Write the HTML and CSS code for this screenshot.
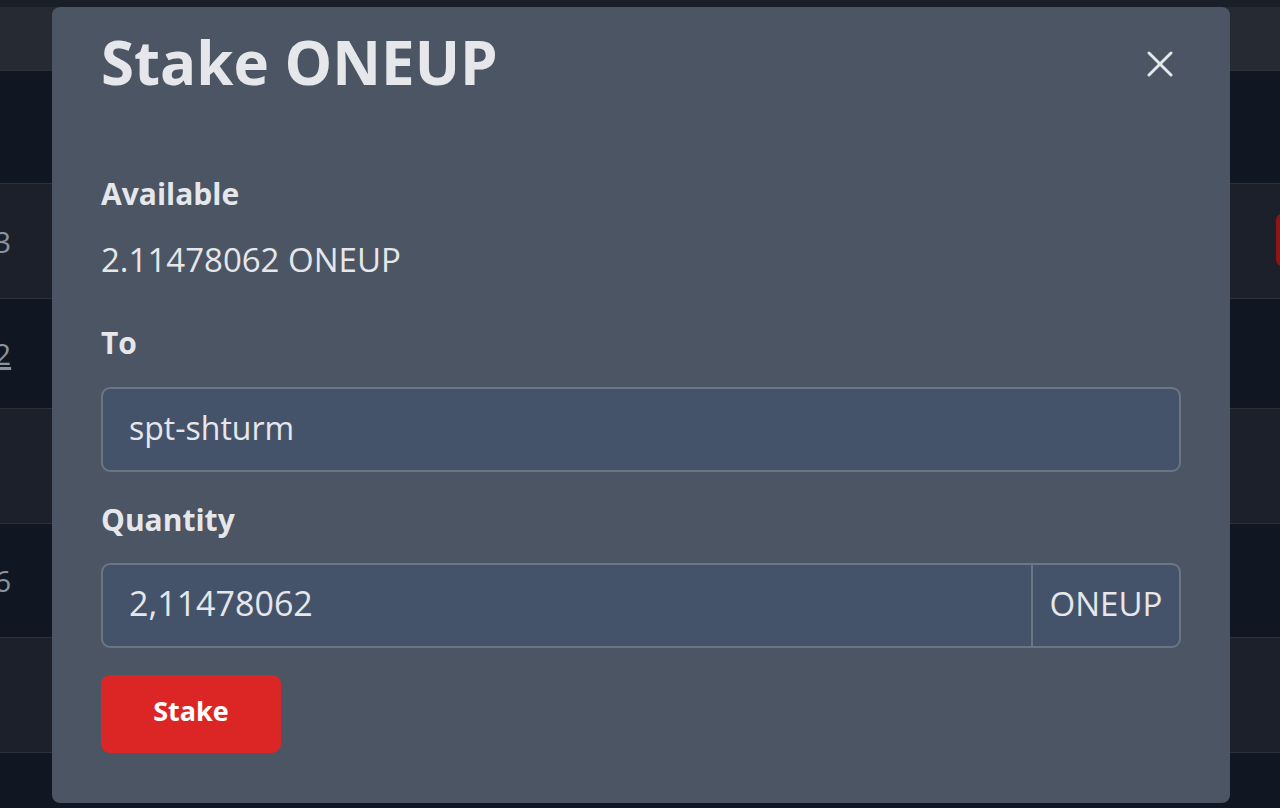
FILE: index.html
```html
<!DOCTYPE html>
<html>
<head>
<meta charset="utf-8">
<link rel="stylesheet" href="styles.css">
</head>
<body>
<div class="page">
  <div class="topstrip"></div>
  <div class="thead"></div>
  <div class="row dark r1"></div>
  <div class="row light r2"><span class="num">3</span><span class="redbtn"></span></div>
  <div class="row dark r3"><span class="num underline">2</span></div>
  <div class="row light r4"></div>
  <div class="row dark r5"><span class="num">6</span></div>
  <div class="row light r6"></div>
  <div class="row dark r7"></div>
</div>

<div class="modal">
  <div class="modal-header">
    <h2 class="title">Stake ONEUP</h2>
    <button class="close" aria-label="Close">
      <svg width="26" height="26" viewBox="0 0 26 26"><path d="M2 2 L24 24 M24 2 L2 24" stroke="#e5e7eb" stroke-width="3" stroke-linecap="round"/></svg>
    </button>
  </div>
  <div class="modal-body">
    <div class="label first">Available</div>
    <div class="value">2.11478062 ONEUP</div>
    <div class="label to">To</div>
    <div class="input">spt-shturm</div>
    <div class="label qty">Quantity</div>
    <div class="input-group">
      <div class="input-field">2,11478062</div>
      <div class="addon">ONEUP</div>
    </div>
    <button class="stake">Stake</button>
  </div>
</div>
</body>
</html>
```

FILE: styles.css
```css
html, body {
  margin: 0;
  padding: 0;
  background: #111722;
  font-family: "Open Sans", "Lato", sans-serif;
  overflow: hidden;
}
.page {
  width: 1280px;
  height: 808px;
  overflow: hidden;
  display: flex;
  flex-direction: column;
}
.topstrip {
  flex-shrink: 0;
  height: 7px;
  background: #1b1f27;
}
.thead {
  flex-shrink: 0;
  height: 63px;
  background: #252a33;
}
.row {
  flex-shrink: 0;
  box-sizing: border-box;
  height: 114px;
  border-top: 1px solid #2b313b;
  position: relative;
  display: flex;
  align-items: center;
}
.row.r1 { height: 113px; }
.row.r2 { height: 115px; }
.row.r3 { height: 110px; }
.row.r4 { height: 115px; }
.row.r5 { height: 114px; }
.row.r6 { height: 115px; }
.row.dark { background: #111722; }
.row.light { background: #1b202a; }
.num {
  color: #8b929e;
  font-size: 30px;
  margin-left: -6px;
}
.num.underline { text-decoration: underline; }
.redbtn {
  position: absolute;
  right: -20px;
  top: 30px;
  width: 24px;
  height: 52px;
  border-radius: 6px;
  background: #8e1515;
}

.modal {
  position: absolute;
  left: 52px;
  top: 7px;
  width: 1178px;
  height: 796px;
  box-sizing: border-box;
  background: #4b5563;
  border-radius: 8px;
  padding: 19px 49px 0 49px;
  color: #e5e7eb;
}
.modal-header {
  display: flex;
  align-items: center;
  justify-content: space-between;
  height: 72px;
}
.title {
  margin: 0;
  font-size: 60px;
  font-weight: 700;
  line-height: 72px;
  color: #e5e7eb;
}
.close {
  background: none;
  border: 0;
  padding: 0;
  margin-right: 8px;
  margin-top: 4px;
  display: flex;
}
.modal-body {
  display: flex;
  flex-direction: column;
  align-items: flex-start;
}
.label {
  font-size: 30px;
  font-weight: 700;
  line-height: 40px;
  color: #e5e7eb;
}
.label.first { margin-top: 76px; }
.value {
  margin-top: 26px;
  font-size: 33px;
  line-height: 40px;
}
.label.to { margin-top: 43px; }
.input, .input-group {
  margin-top: 24px;
  width: 1080px;
  box-sizing: border-box;
  height: 85px;
  border: 2px solid #6b7586;
  border-radius: 9px;
  background: #45536a;
}
.input {
  display: flex;
  align-items: center;
  padding-left: 26px;
  padding-bottom: 4px;
  font-size: 32px;
}
.label.qty { margin-top: 28px; }
.input-group {
  margin-top: 23px;
  display: flex;
}
.input-field {
  flex: 1;
  display: flex;
  align-items: center;
  padding-left: 26px;
  padding-bottom: 5px;
  font-size: 34px;
  border-right: 2px solid #6b7586;
}
.addon {
  width: 146px;
  display: flex;
  align-items: center;
  justify-content: center;
  padding-bottom: 4px;
  font-size: 33px;
}
.stake {
  margin-top: 27px;
  width: 180px;
  height: 78px;
  border: 0;
  border-radius: 9px;
  background: #dc2626;
  color: #ffffff;
  font-family: inherit;
  font-size: 27px;
  font-weight: 700;
  padding: 0 0 7px 0;
}
```
